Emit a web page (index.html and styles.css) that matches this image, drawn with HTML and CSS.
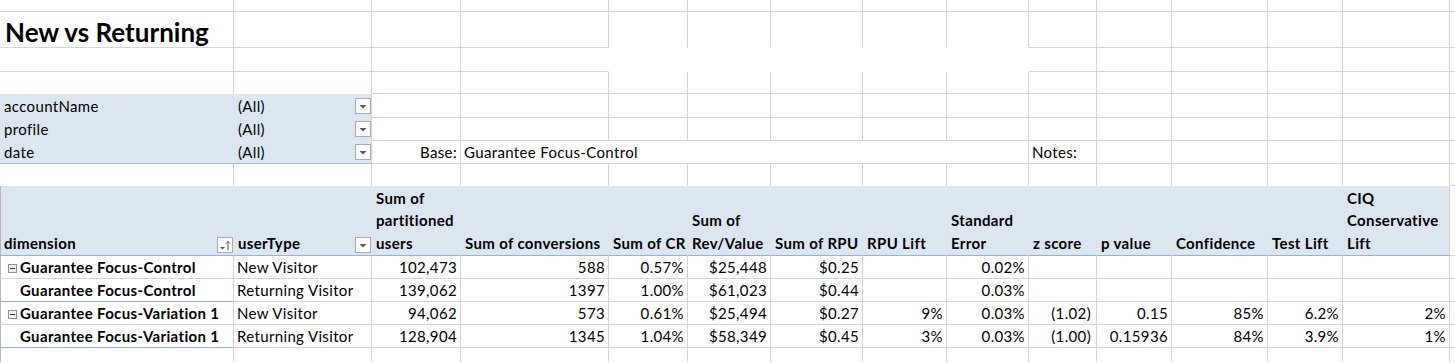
FILE: index.html
```html
<!DOCTYPE html>
<html lang="en">
<head>
<meta charset="utf-8">
<title>New vs Returning</title>
<link rel="stylesheet" href="styles.css">
</head>
<body>
<div class="sheet">
  <div class="row h12">
    <div class="c"></div><div class="c"></div><div class="c"></div><div class="c"></div><div class="c"></div><div class="c"></div><div class="c"></div><div class="c"></div><div class="c"></div><div class="c"></div><div class="c"></div><div class="c"></div><div class="c"></div><div class="c"></div><div class="c"></div>
  </div>
  <div class="row h36">
    <div class="c title">New vs Returning</div><div class="c"></div><div class="c"></div><div class="c"></div><div class="c nb"></div><div class="c nb"></div><div class="c nb"></div><div class="c nb"></div><div class="c nb"></div><div class="c"></div><div class="c"></div><div class="c"></div><div class="c"></div><div class="c"></div><div class="c"></div>
  </div>
  <div class="row h24">
    <div class="c"></div><div class="c"></div><div class="c"></div><div class="c nr"></div><div class="c nr nb span5"></div><div class="c"></div><div class="c"></div><div class="c"></div><div class="c"></div><div class="c"></div><div class="c"></div>
  </div>
  <div class="row h22">
    <div class="c nb"></div><div class="c nb"></div><div class="c"></div><div class="c"></div><div class="c"></div><div class="c"></div><div class="c"></div><div class="c"></div><div class="c"></div><div class="c"></div><div class="c"></div><div class="c"></div><div class="c"></div><div class="c"></div><div class="c"></div>
  </div>
  <div class="row h24">
    <div class="c blue nr nb">accountName</div>
    <div class="c blue nb">(All)<svg class="dd" viewBox="0 0 16 16" width="16" height="16"><rect x="0.5" y="0.5" width="15" height="15" fill="#fbfbfb" stroke="#a9adb2"/><path d="M4.5 7h7l-3.5 3.5z" fill="#5a5a5a"/></svg></div>
    <div class="c"></div><div class="c"></div><div class="c"></div><div class="c"></div><div class="c"></div><div class="c"></div><div class="c"></div><div class="c"></div><div class="c"></div><div class="c"></div><div class="c"></div><div class="c"></div><div class="c"></div>
  </div>
  <div class="row h23">
    <div class="c blue nr nb">profile</div>
    <div class="c blue nb">(All)<svg class="dd" viewBox="0 0 16 16" width="16" height="16"><rect x="0.5" y="0.5" width="15" height="15" fill="#fbfbfb" stroke="#a9adb2"/><path d="M4.5 7h7l-3.5 3.5z" fill="#5a5a5a"/></svg></div>
    <div class="c"></div><div class="c"></div><div class="c"></div><div class="c"></div><div class="c"></div><div class="c"></div><div class="c"></div><div class="c"></div><div class="c"></div><div class="c"></div><div class="c"></div><div class="c"></div><div class="c"></div>
  </div>
  <div class="row h23">
    <div class="c blue nr fb">date</div>
    <div class="c blue fb">(All)<svg class="dd" viewBox="0 0 16 16" width="16" height="16"><rect x="0.5" y="0.5" width="15" height="15" fill="#fbfbfb" stroke="#a9adb2"/><path d="M4.5 7h7l-3.5 3.5z" fill="#5a5a5a"/></svg></div>
    <div class="c num">Base:</div>
    <div class="c span6">Guarantee Focus-Control</div>
    <div class="c">Notes:</div>
    <div class="c"></div><div class="c"></div><div class="c"></div><div class="c"></div><div class="c"></div>
  </div>
  <div class="row h22">
    <div class="c nb"></div><div class="c nb"></div><div class="c nb"></div><div class="c nb"></div><div class="c nb"></div><div class="c nb"></div><div class="c nb"></div><div class="c nb"></div><div class="c nb"></div><div class="c nb"></div><div class="c nb"></div><div class="c nb"></div><div class="c nb"></div><div class="c nb"></div><div class="c"></div>
  </div>
  <div class="row h70 head">
    <div class="c hd edge">dimension<svg class="dd hdd" viewBox="0 0 16 16" width="16" height="16"><rect x="0.5" y="0.5" width="15" height="15" fill="#fbfbfb" stroke="#a9adb2"/><path d="M3 10h5l-2.5 2.5z" fill="#5a5a5a"/><path d="M11 4.5v8.5" stroke="#5a5a5a"/><path d="M9.2 6.6l1.8-2.2 1.8 2.2" fill="none" stroke="#5a5a5a"/></svg></div>
    <div class="c hd">userType<svg class="dd hdd" viewBox="0 0 16 16" width="16" height="16"><rect x="0.5" y="0.5" width="15" height="15" fill="#fbfbfb" stroke="#a9adb2"/><path d="M4.5 7h7l-3.5 3.5z" fill="#5a5a5a"/></svg></div>
    <div class="c hd">Sum of<br>partitioned<br>users</div>
    <div class="c hd">Sum of conversions</div>
    <div class="c hd">Sum of CR</div>
    <div class="c hd">Sum of<br>Rev/Value</div>
    <div class="c hd">Sum of RPU</div>
    <div class="c hd">RPU Lift</div>
    <div class="c hd">Standard<br>Error</div>
    <div class="c hd">z score</div>
    <div class="c hd">p value</div>
    <div class="c hd">Confidence</div>
    <div class="c hd">Test Lift</div>
    <div class="c hd last">CIQ<br>Conservative<br>Lift</div>
    <div class="c"></div>
  </div>
  <div class="row h23">
    <div class="c dim edge"><svg class="exp" viewBox="0 0 9 9" width="9" height="9"><rect x="0.5" y="0.5" width="8" height="8" fill="#f3f3f3" stroke="#8f8f8f"/><path d="M2 4.5h5" stroke="#3a3a3a"/></svg>Guarantee Focus-Control</div>
    <div class="c">New Visitor</div>
    <div class="c num">102,473</div>
    <div class="c num">588</div>
    <div class="c num">0.57%</div>
    <div class="c num">$25,448</div>
    <div class="c num">$0.25</div>
    <div class="c num"></div>
    <div class="c num">0.02%</div>
    <div class="c num"></div><div class="c num"></div><div class="c num"></div><div class="c num"></div><div class="c num"></div><div class="c"></div>
  </div>
  <div class="row h23">
    <div class="c dim sub edge grp">Guarantee Focus-Control</div>
    <div class="c">Returning Visitor</div>
    <div class="c num">139,062</div>
    <div class="c num">1397</div>
    <div class="c num">1.00%</div>
    <div class="c num">$61,023</div>
    <div class="c num">$0.44</div>
    <div class="c num"></div>
    <div class="c num">0.03%</div>
    <div class="c num"></div><div class="c num"></div><div class="c num"></div><div class="c num"></div><div class="c num"></div><div class="c"></div>
  </div>
  <div class="row h23">
    <div class="c dim edge"><svg class="exp" viewBox="0 0 9 9" width="9" height="9"><rect x="0.5" y="0.5" width="8" height="8" fill="#f3f3f3" stroke="#8f8f8f"/><path d="M2 4.5h5" stroke="#3a3a3a"/></svg>Guarantee Focus-Variation 1</div>
    <div class="c">New Visitor</div>
    <div class="c num">94,062</div>
    <div class="c num">573</div>
    <div class="c num">0.61%</div>
    <div class="c num">$25,494</div>
    <div class="c num">$0.27</div>
    <div class="c num">9%</div>
    <div class="c num">0.03%</div>
    <div class="c num zs">(1.02)</div>
    <div class="c num">0.15</div>
    <div class="c num">85%</div>
    <div class="c num">6.2%</div>
    <div class="c num">2%</div>
    <div class="c"></div>
  </div>
  <div class="row h23">
    <div class="c dim sub edge grp">Guarantee Focus-Variation 1</div>
    <div class="c">Returning Visitor</div>
    <div class="c num">128,904</div>
    <div class="c num">1345</div>
    <div class="c num">1.04%</div>
    <div class="c num">$58,349</div>
    <div class="c num">$0.45</div>
    <div class="c num">3%</div>
    <div class="c num">0.03%</div>
    <div class="c num zs">(1.00)</div>
    <div class="c num">0.15936</div>
    <div class="c num">84%</div>
    <div class="c num">3.9%</div>
    <div class="c num">1%</div>
    <div class="c"></div>
  </div>
  <div class="row h15">
    <div class="c nb edge"></div><div class="c nb"></div><div class="c nb"></div><div class="c nb"></div><div class="c nb"></div><div class="c nb"></div><div class="c nb"></div><div class="c nb"></div><div class="c nb"></div><div class="c nb"></div><div class="c nb"></div><div class="c nb"></div><div class="c nb"></div><div class="c nb"></div><div class="c nb"></div>
  </div>
</div>
</body>
</html>
```

FILE: styles.css
```css
html, body {
  margin: 0;
  padding: 0;
  background: #ffffff;
}

body {
  width: 1455px;
  height: 363px;
  overflow: hidden;
  font-family: Lato, "Liberation Sans", sans-serif;
  font-size: 15px;
  letter-spacing: 0.35px;
  color: #000000;
}

.sheet {
  display: flex;
  flex-direction: column;
}

.row {
  display: grid;
  grid-template-columns: 234px 138px 89px 148px 79px 83px 92px 84px 82px 68px 75px 96px 75px 107px 1fr;
}

.h12 { height: 12px; }
.h15 { height: 15px; }
.h22 { height: 22px; }
.h23 { height: 23px; }
.h24 { height: 24px; }
.h36 { height: 36px; }
.h70 { height: 70px; }

.c {
  box-sizing: border-box;
  min-width: 0;
  border-right: 1px solid #d4d4d4;
  border-bottom: 1px solid #d4d4d4;
  padding: 0 3px;
  display: flex;
  align-items: flex-end;
  white-space: nowrap;
  line-height: 22px;
}

.span5 { grid-column: span 5; }
.span6 { grid-column: span 6; }

.nr { border-right-color: transparent; }
.nb { border-bottom-color: transparent; }

.num { justify-content: flex-end; }
.zs { padding-right: 5px; }

.title {
  font-weight: 700;
  font-size: 26px;
  letter-spacing: 0;
  line-height: 30px;
  padding-left: 5px;
}

.blue {
  background: #dce6f1;
  align-items: center;
  line-height: 20px;
  padding-left: 4px;
}

.fb { border-bottom-color: #a4bad6; }

.dd {
  flex: none;
  margin-left: auto;
  margin-right: -3px;
  display: block;
}

.head .c {
  background: #dce6f1;
  border-right-color: transparent;
  border-bottom-color: #95b3d7;
}

.head .c:last-child {
  background: #ffffff;
  border-right-color: #d4d4d4;
  border-bottom-color: #d4d4d4;
}

.head .c.last { border-right-color: #d4d4d4; }

.hd {
  font-weight: 700;
  line-height: 22.5px;
  padding-bottom: 1px;
  white-space: nowrap;
  padding-left: 4px;
}

.hdd {
  align-self: flex-end;
  margin-bottom: 1px;
}

.edge { box-shadow: inset 1px 0 #b8b8b8; }

.dim {
  font-weight: 700;
  padding-left: 8px;
}

.sub { padding-left: 20px; }

.grp { border-bottom-color: #95b3d7; }

.exp {
  flex: none;
  display: block;
  margin-right: 3px;
  margin-bottom: 5px;
}
```
